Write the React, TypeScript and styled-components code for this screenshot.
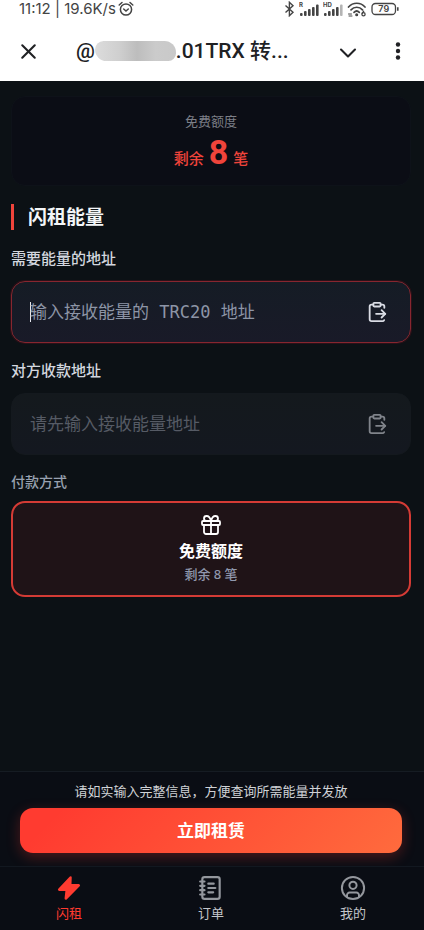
import React from "react";
import styled, { createGlobalStyle, css } from "styled-components";
import { ChevronDown, ClipboardPaste, Gift, NotebookText, X } from "lucide-react";

const cjk = `"Noto Sans CJK SC", sans-serif`;

const GlobalStyle = createGlobalStyle`
  * { box-sizing: border-box; }
  body { margin: 0; background: #0c1115; }
  button, input { font: inherit; color: inherit; margin: 0; padding: 0; border: 0; background: none; }
`;

const Page = styled.div`
  min-height: 100vh;
  display: flex;
  flex-direction: column;
  background: #0c1115;
  font-family: "Noto Sans", ${cjk};
`;

const TopArea = styled.header`
  background: #fff;
  color: #202124;
`;

const StatusBar = styled.div`
  height: 20px;
  display: flex;
  align-items: center;
  justify-content: space-between;
  padding: 0 25px 2px 19px;
  font: 15px/18px Inter, sans-serif;
  color: #444;
`;

const StatusGroup = styled.div<{ $gap: number }>`
  display: flex;
  align-items: center;
  gap: ${(p) => p.$gap}px;
`;

const TitleBar = styled.div`
  height: 61px;
  display: flex;
  align-items: center;
  padding: 0 14px 0 16px;
`;

const IconButton = styled.button`
  width: 24px;
  height: 24px;
  flex: none;
  display: grid;
  place-items: center;
  cursor: pointer;
`;

const Title = styled.h1`
  flex: 1;
  display: flex;
  align-items: center;
  margin: 0 0 0 36px;
  font: 500 21px/28px Roboto, ${cjk};
  white-space: nowrap;
`;

const Redaction = styled.span`
  width: 81px;
  height: 20px;
  border-radius: 9px 12px 8px 12px;
  background: linear-gradient(90deg, #dcdcdc, #cfcfcf 30%, #bdbdbd 52%, #cbcbcb 75%, #c9c9c9);
`;

const TitleActions = styled.div`
  display: flex;
  gap: 28px;
`;

const Main = styled.main`
  flex: 1;
  padding: 15px 13px 24px 11px;
`;

const QuotaCard = styled.section`
  height: 90px;
  display: flex;
  flex-direction: column;
  align-items: center;
  padding-top: 15px;
  border: 1px solid #0e1219;
  border-radius: 14px;
  background: #0b0d15;
`;

const QuotaLabel = styled.div`
  font-size: 13px;
  line-height: 18px;
  color: #7c7f87;
`;

const QuotaValue = styled.div`
  display: flex;
  align-items: baseline;
  gap: 5px;
  font-size: 15px;
  font-weight: 500;
  line-height: 44px;
  color: #f0443b;
`;

const QuotaNumber = styled.strong`
  font: 700 34px/44px Roboto, sans-serif;
`;

const SectionTitle = styled.h2`
  margin: 18px 0 16px;
  padding-left: 14px;
  border-left: 3px solid #f0443b;
  font-size: 19px;
  font-weight: 700;
  line-height: 26px;
  color: #f4f6f8;
`;

const FieldLabel = styled.label<{ $muted?: boolean }>`
  display: block;
  font-size: ${(p) => (p.$muted ? 14 : 15)}px;
  font-weight: 500;
  line-height: 24px;
  color: ${(p) => (p.$muted ? "#98a1b0" : "#d3d7df")};
`;

const Field = styled.div<{ $active?: boolean }>`
  height: 62px;
  display: flex;
  align-items: center;
  margin: 11px 0 15px;
  padding: 0 22px 0 18px;
  border: 1px solid #14191e;
  border-radius: 14px;
  background: linear-gradient(#14191d, #141820);
  color: #565b65;
  ${(p) =>
    p.$active &&
    css`
      border-color: #87262f;
      background: linear-gradient(#151c25, #191a28);
      box-shadow: 0 0 0 1px #2a1118;
      color: #8d95a6;
    `}
`;

const Caret = styled.span`
  width: 1px;
  height: 20px;
  margin-right: -1px;
  background: #e4e7ee;
`;

const FieldInput = styled.input`
  flex: 1;
  min-width: 0;
  height: 40px;
  outline: 0;
  font: 17px "DejaVu Sans Mono", ${cjk};
  caret-color: transparent;
  &::placeholder { color: inherit; opacity: 1; }
`;

const PasteButton = styled(IconButton)<{ $active?: boolean }>`
  width: 22px;
  color: ${(p) => (p.$active ? "#d9dce4" : "#80848b")};
`;

const PayOption = styled.button`
  width: 100%;
  height: 96px;
  display: flex;
  flex-direction: column;
  align-items: center;
  justify-content: center;
  margin-top: 7px;
  border: 2px solid #d43b35;
  border-radius: 14px;
  background: #1f1317;
  color: #fff;
  cursor: pointer;
`;

const PayName = styled.span`
  margin-top: 2px;
  font-size: 16px;
  font-weight: 700;
  line-height: 24px;
`;

const PayDetail = styled.span`
  font-size: 13px;
  font-weight: 500;
  line-height: 22px;
  color: #8f98ad;
`;

const Checkout = styled.section`
  padding: 9px 22px 13px 20px;
  border-top: 1px solid #161c23;
  background: #0a0d14;
  text-align: center;
`;

const Note = styled.p`
  margin: 0 0 7px;
  font-size: 13px;
  line-height: 20px;
  color: #cfd2d6;
`;

const RentButton = styled.button`
  width: 100%;
  height: 45px;
  display: block;
  border-radius: 13px;
  background: linear-gradient(135deg, #ff3b30 10%, #ff6b3d);
  box-shadow: 0 4px 14px rgba(255, 59, 48, 0.28);
  color: #fff;
  font-size: 17px;
  font-weight: 700;
  line-height: 24px;
  cursor: pointer;
`;

const TabBar = styled.nav`
  height: 64px;
  display: grid;
  grid-template-columns: 1fr 146px 1fr;
  padding: 8px 2px 0 0;
  border-top: 1px solid #121820;
  background: #0a0d14;
`;

const Tab = styled.a<{ $active?: boolean }>`
  display: flex;
  flex-direction: column;
  align-items: center;
  gap: 2px;
  font-size: 13px;
  line-height: 20px;
  text-decoration: none;
  color: ${(p) => (p.$active ? "#ff3b30" : "#c3c6cb")};
  svg { color: ${(p) => (p.$active ? "#ff3b30" : "#94979d")}; }
`;

const AlarmIcon = () => (
  <svg width="16" height="16" viewBox="0 0 16 16" fill="none" stroke="currentColor" strokeWidth="1.5" strokeLinecap="round">
    <circle cx="8" cy="8.5" r="5.6" />
    <path d="M1.2 4 4 1.5M14.8 4 12 1.5M5.7 8l2.3 2 2.3-2" />
  </svg>
);

const BluetoothIcon = () => (
  <svg width="11" height="16" viewBox="0 0 11 16" fill="none" stroke="currentColor" strokeWidth="1.4">
    <path d="m1.5 4.5 7.5 6.8-3.6 3.4V1.3L9 4.7l-7.5 6.8" />
  </svg>
);

const SignalIcon = ({ label, weak }: { label: string; weak?: boolean }) => (
  <svg width="20" height="16" viewBox="0 0 20 16" fill="currentColor">
    <text x="0" y="6" fontSize="6" fontWeight="700" fontFamily="Inter, sans-serif">{label}</text>
    <rect x="1" y="12" width="2.6" height="3" rx="1" />
    <rect x="5" y="10" width="2.6" height="5" rx="1" />
    <rect x="9" y="8" width="2.6" height="7" rx="1" />
    <rect x="13" y="6" width="2.6" height="9" rx="1" />
    <rect x="17" y="3.5" width="2.6" height="11.5" rx="1" opacity={weak ? 0.4 : 1} />
  </svg>
);

const WifiIcon = () => (
  <svg width="20" height="16" viewBox="0 0 20 16" fill="none" stroke="currentColor" strokeWidth="1.7" strokeLinecap="round">
    <path d="M1.5 6C6 1 13.5 1 18 6M4 8.8c3.2-3.4 8.3-3.4 11.5 0M7 11.3c1.7-1.6 3.7-1.6 5.3 0" />
    <circle cx="9.7" cy="13.7" r=".7" fill="currentColor" />
    <path d="M1.5 13h3M2 15h3" strokeWidth="1" />
    <circle cx="16.5" cy="13.2" r="1.6" strokeWidth="1.3" />
    <path d="m15.2 12.4 1.5-2.2" strokeWidth="1.3" />
  </svg>
);

const BatteryIcon = () => (
  <svg width="28" height="14" viewBox="0 0 28 14" fill="none" stroke="currentColor" strokeWidth="1.3">
    <rect x="1" y="1.5" width="23.5" height="11" rx="3.5" />
    <path d="M26.8 5.3v3.4" strokeWidth="1.6" />
    <text x="12.8" y="10.2" textAnchor="middle" fontSize="9" fontWeight="600" fontFamily="Inter, sans-serif" fill="currentColor" stroke="none">79</text>
  </svg>
);

const MoreIcon = () => (
  <svg width="24" height="24" viewBox="0 0 24 24" fill="currentColor">
    <circle cx="12" cy="5.5" r="2.2" />
    <circle cx="12" cy="12" r="2.2" />
    <circle cx="12" cy="18.500" r="2.2" />
  </svg>
);

const BoltIcon = () => (
  <svg width="26" height="26" viewBox="0 0 26 26" fill="currentColor" stroke="currentColor" strokeWidth="2.5" strokeLinejoin="round">
    <path d="M14.5 2.5 3.2 14.7h7.6L9.8 23.5l13-13.2h-8.600z" />
  </svg>
);

const ProfileIcon = () => (
  <svg width="26" height="26" viewBox="0 0 26 26" fill="none" stroke="currentColor" strokeWidth="2">
    <circle cx="13" cy="13" r="11.1" />
    <circle cx="13" cy="10.300" r="3.6" />
    <path d="M7 22v-1.800a2.600 2.600 0 0 1 2.600-2.600h6.800a2.600 2.600 0 0 1 2.600 2.600V22" />
  </svg>
);

export default function App() {
  return (
    <Page>
      <GlobalStyle />
      <TopArea>
        <StatusBar>
          <StatusGroup $gap={2}>
            <span>11:12 | 19.6K/s</span>
            <AlarmIcon />
          </StatusGroup>
          <StatusGroup $gap={4}>
            <BluetoothIcon />
            <SignalIcon label="R" />
            <SignalIcon label="HD" weak />
            <WifiIcon />
            <BatteryIcon />
          </StatusGroup>
        </StatusBar>
        <TitleBar>
          <IconButton aria-label="关闭"><X size={25} strokeWidth={2} /></IconButton>
          <Title>@<Redaction />.01TRX 转...</Title>
          <TitleActions>
            <IconButton aria-label="展开"><ChevronDown size={28} strokeWidth={1.8} /></IconButton>
            <IconButton aria-label="更多"><MoreIcon /></IconButton>
          </TitleActions>
        </TitleBar>
      </TopArea>
      <Main>
        <QuotaCard>
          <QuotaLabel>免费额度</QuotaLabel>
          <QuotaValue>剩余<QuotaNumber>8</QuotaNumber>笔</QuotaValue>
        </QuotaCard>
        <SectionTitle>闪租能量</SectionTitle>
        <FieldLabel htmlFor="receiver">需要能量的地址</FieldLabel>
        <Field $active>
          <Caret />
          <FieldInput id="receiver" placeholder="输入接收能量的 TRC20 地址" />
          <PasteButton $active aria-label="粘贴"><ClipboardPaste size={22} /></PasteButton>
        </Field>
        <FieldLabel htmlFor="payee">对方收款地址</FieldLabel>
        <Field>
          <FieldInput id="payee" placeholder="请先输入接收能量地址" />
          <PasteButton aria-label="粘贴"><ClipboardPaste size={22} /></PasteButton>
        </Field>
        <FieldLabel $muted htmlFor="free-quota">付款方式</FieldLabel>
        <PayOption id="free-quota">
          <Gift size={24} strokeWidth={1.8} />
          <PayName>免费额度</PayName>
          <PayDetail>剩余 8 笔</PayDetail>
        </PayOption>
      </Main>
      <Checkout>
        <Note>请如实输入完整信息，方便查询所需能量并发放</Note>
        <RentButton>立即租赁</RentButton>
      </Checkout>
      <TabBar>
        <Tab href="#rent" $active><BoltIcon />闪租</Tab>
        <Tab href="#orders"><NotebookText size={26} />订单</Tab>
        <Tab href="#profile"><ProfileIcon />我的</Tab>
      </TabBar>
    </Page>
  );
}
